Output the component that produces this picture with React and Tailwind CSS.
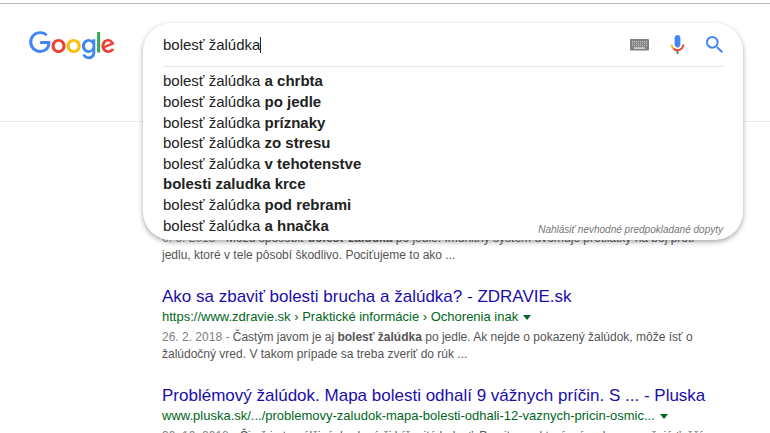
import { useState } from 'react';

const suggestions = [
    { typed: 'bolesť žalúdka', rest: 'a chrbta' },
    { typed: 'bolesť žalúdka', rest: 'po jedle' },
    { typed: 'bolesť žalúdka', rest: 'príznaky' },
    { typed: 'bolesť žalúdka', rest: 'zo stresu' },
    { typed: 'bolesť žalúdka', rest: 'v tehotenstve' },
    { typed: '', rest: 'bolesti zaludka krce' },
    { typed: 'bolesť žalúdka', rest: 'pod rebrami' },
    { typed: 'bolesť žalúdka', rest: 'a hnačka' },
];

function GoogleLogo() {
    return (
        <svg viewBox="0 0 272 92" className="w-[86px]" aria-hidden="true">
            <path fill="#EA4335" d="M115.75 47.18c0 12.77-9.99 22.18-22.25 22.18s-22.25-9.41-22.25-22.18C71.25 34.32 81.24 25 93.5 25s22.25 9.32 22.25 22.18zm-9.74 0c0-7.98-5.79-13.44-12.51-13.44S80.99 39.2 80.99 47.18c0 7.9 5.79 13.44 12.51 13.44s12.51-5.55 12.51-13.44z" />
            <path fill="#FBBC05" d="M163.75 47.18c0 12.77-9.99 22.18-22.25 22.18s-22.25-9.41-22.25-22.18c0-12.85 9.99-22.18 22.25-22.18s22.25 9.32 22.25 22.18zm-9.74 0c0-7.98-5.79-13.44-12.51-13.44s-12.51 5.46-12.51 13.44c0 7.9 5.79 13.44 12.51 13.44s12.51-5.55 12.51-13.44z" />
            <path fill="#4285F4" d="M209.75 26.34v39.82c0 16.38-9.66 23.07-21.08 23.07-10.75 0-17.22-7.19-19.66-13.07l8.48-3.53c1.51 3.61 5.21 7.87 11.17 7.87 7.31 0 11.84-4.51 11.84-13v-3.19h-.34c-2.18 2.69-6.38 5.04-11.68 5.04-11.09 0-21.25-9.66-21.25-22.09 0-12.52 10.16-22.26 21.25-22.26 5.29 0 9.49 2.35 11.68 4.96h.34v-3.61h9.25zm-8.56 20.92c0-7.81-5.21-13.52-11.84-13.52-6.72 0-12.35 5.71-12.35 13.52 0 7.73 5.63 13.36 12.35 13.36 6.63 0 11.84-5.63 11.84-13.36z" />
            <path fill="#34A853" d="M225 3v65h-9.5V3h9.5z" />
            <path fill="#EA4335" d="M262.02 54.48l7.56 5.04c-2.44 3.61-8.32 9.83-18.48 9.83-12.6 0-22.01-9.74-22.01-22.18 0-13.19 9.49-22.18 20.92-22.18 11.51 0 17.14 9.16 18.98 14.11l1.01 2.52-29.65 12.28c2.27 4.45 5.8 6.72 10.75 6.72 4.96 0 8.4-2.44 10.92-6.14zm-23.27-7.98l19.82-8.23c-1.09-2.77-4.37-4.7-8.23-4.7-4.95 0-11.84 4.37-11.59 12.93z" />
            <path fill="#4285F4" d="M35.29 41.41V32H67c.31 1.64.47 3.58.47 5.68 0 7.06-1.93 15.79-8.15 22.01-6.05 6.3-13.78 9.66-24.02 9.66C16.32 69.35.36 53.89.36 34.91.36 15.93 16.32.47 35.3.47c10.5 0 17.98 4.12 23.6 9.49l-6.64 6.64c-4.03-3.78-9.49-6.72-16.97-6.72-13.86 0-24.7 11.17-24.7 25.03 0 13.86 10.84 25.03 24.7 25.03 8.99 0 14.11-3.61 17.39-6.89 2.66-2.66 4.41-6.46 5.1-11.65l-22.49.01z" />
        </svg>
    );
}

function KeyboardIcon() {
    return (
        <svg viewBox="0 0 19 12" className="w-[19px]" aria-hidden="true">
            <rect width="19" height="11.5" rx="0.8" fill="#808080" />
            <g stroke="#c4c4c4" strokeWidth="1.1" strokeDasharray="1.2 0.8">
                <path d="M2 2.6h15.2M2 4.7h15.2M2 6.8h15.2" />
            </g>
            <path d="M4 9.1h11" stroke="#f2f2f2" strokeWidth="1.2" />
        </svg>
    );
}

function MicIcon() {
    return (
        <svg viewBox="0 0 24 24" className="w-[23px]" aria-hidden="true">
            <path fill="#4285f4" d="M12 15c1.66 0 3-1.31 3-2.97v-7.02c0-1.66-1.34-3.01-3-3.01s-3 1.34-3 3.01v7.02c0 1.66 1.34 2.97 3 2.97z" />
            <path fill="#34a853" d="M11 18.08h2v3.92h-2z" />
            <path fill="#fbbc05" d="M7.05 16.87c-1.27-1.33-2.05-2.83-2.05-4.87h2c0 1.45.56 2.42 1.47 3.38v.32l-1.15 1.18z" />
            <path fill="#ea4335" d="M12 16.93a4.97 5.25 0 0 1-3.54-1.55l-1.41 1.49c1.26 1.34 3.02 2.13 4.95 2.13 3.87 0 6.99-2.92 6.99-7h-1.99c0 2.92-2.24 4.93-5 4.93z" />
        </svg>
    );
}

function SearchIcon() {
    return (
        <svg viewBox="3 3 17.5 17.5" className="w-[17px]" aria-hidden="true">
            <path fill="#4285f4" d="M15.5 14h-.79l-.28-.27A6.47 6.47 0 0 0 16 9.5 6.5 6.5 0 1 0 9.5 16c1.61 0 3.09-.59 4.23-1.57l.27.28v.79l5 4.99L20.49 19l-4.99-5zm-6 0C7.01 14 5 11.99 5 9.5S7.01 5 9.5 5 14 7.01 14 9.5 11.99 14 9.5 14z" />
        </svg>
    );
}

function SearchBox() {
    const [query, setQuery] = useState('bolesť žalúdka');

    return (
        <form
            onSubmit={e => e.preventDefault()}
            className="absolute inset-x-0 top-0 z-10 rounded-[28px] bg-white px-5 pb-1 shadow-[0_2px_5px_rgba(64,60,67,0.45)]"
        >
            <div className="flex h-11 items-center border-b border-gray-200">
                <div className="flex flex-1 items-center">
                    <input
                        type="text"
                        aria-label="Hľadať"
                        value={query}
                        onChange={e => setQuery(e.target.value)}
                        className="field-sizing-content bg-transparent text-[15px] leading-5 text-[#222] outline-none"
                    />
                    {/* Text cursor right behind the typed query */}
                    <span className="h-4 w-px bg-gray-800" />
                </div>
                <div className="flex items-center gap-[17px]">
                    <button type="button" aria-label="Klávesnica"><KeyboardIcon /></button>
                    <button type="button" aria-label="Hlasové vyhľadávanie"><MicIcon /></button>
                    <button type="submit" aria-label="Vyhľadať"><SearchIcon /></button>
                </div>
            </div>

            <div className="flex items-end justify-between pt-1">
                <ul className="grid h-[165px] auto-rows-fr items-center text-[15px] leading-5 text-[#222]">
                    {suggestions.map(s => (
                        <li key={s.rest}>
                            {s.typed} <b>{s.rest}</b>
                        </li>
                    ))}
                </ul>
                <a href="#" className="text-[10px] leading-3 text-[#777] italic">Nahlásiť nevhodné predpokladané dopyty</a>
            </div>
        </form>
    );
}

function Snippet({ date, children }) {
    return (
        <p className="mt-[3px] text-[12px] leading-[17px] text-[#545454]">
            <span className="text-[#808080]">{date} - </span>
            {children}
        </p>
    );
}

function Result({ title, url, date, children }) {
    return (
        <article className="mt-[22px]">
            <h3 className="text-[17px] leading-[22px]">
                <a href="#" className="text-[#1a0dab]">{title}</a>
            </h3>
            <div className="flex items-center gap-[5px] text-[13px] leading-[18px] text-[#006621]">
                <cite className="not-italic">{url}</cite>
                <svg viewBox="0 0 8 5" className="w-2" aria-hidden="true">
                    <path d="M0 0h8L4 5z" fill="currentColor" />
                </svg>
            </div>
            <Snippet date={date}>{children}</Snippet>
        </article>
    );
}

export default function App() {
    return (
        <div className="h-screen overflow-hidden bg-white pt-[3px] font-['Liberation_Sans',Arial,sans-serif]">
            <header className="flex h-[119px] items-start border-t border-b border-t-[#bdbdbd] border-b-[#ebebeb] pt-[19px]">
                <a href="#" aria-label="Google" className="ml-[29px] w-[114px] shrink-0 pt-2">
                    <GoogleLogo />
                </a>
                <div className="relative max-w-[600px] flex-1">
                    <SearchBox />
                </div>
            </header>

            <main className="ml-[162px] max-w-[550px] pt-[105px]">
                <Snippet date="6. 6. 2018">
                    Môžu spôsobiť <b>bolesť žalúdka</b> po jedle. Imunitný systém uvoľňuje protilátky na boj proti jedlu, ktoré v tele pôsobí škodlivo. Pociťujeme to ako ...
                </Snippet>
                <Result
                    title="Ako sa zbaviť bolesti brucha a žalúdka? - ZDRAVIE.sk"
                    url="https://www.zdravie.sk › Praktické informácie › Ochorenia inak"
                    date="26. 2. 2018"
                >
                    Častým javom je aj <b>bolesť žalúdka</b> po jedle. Ak nejde o pokazený žalúdok, môže ísť o žalúdočný vred. V takom prípade sa treba zveriť do rúk ...
                </Result>
                <Result
                    title="Problémový žalúdok. Mapa bolesti odhalí 9 vážnych príčin. S ... - Pluska"
                    url="www.pluska.sk/.../problemovy-zaludok-mapa-bolesti-odhali-12-vaznych-pricin-osmic..."
                    date="30. 10. 2018"
                >
                    Či už je to pálčivá, bodavá či kŕčovitá bolesť. Pozrite sa, ktoré príznaky naznačujú ťažší
                </Result>
            </main>
        </div>
    );
}
